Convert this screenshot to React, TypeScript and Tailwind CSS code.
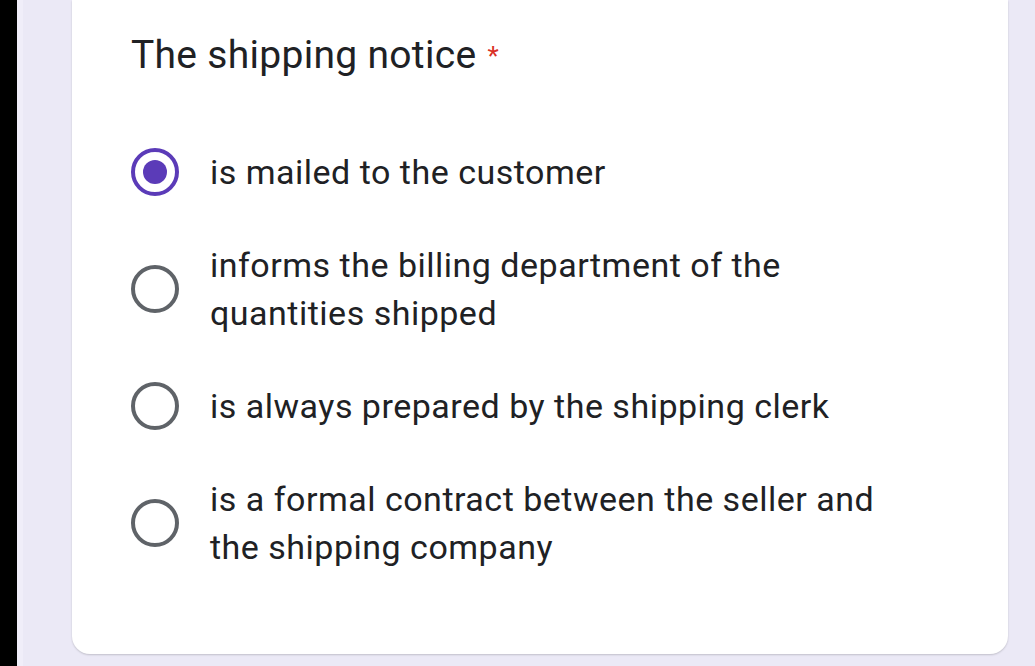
import React from 'react';

const OPTIONS: { lines: string[]; checked?: boolean }[] = [
  { lines: ['is mailed to the customer'], checked: true },
  { lines: ['informs the billing department of the', 'quantities shipped'] },
  { lines: ['is always prepared by the shipping clerk'] },
  { lines: ['is a formal contract between the seller and', 'the shipping company'] },
];

function Radio({ checked }: { checked?: boolean }) {
  if (checked) {
    return (
      <div className="w-12 h-12 shrink-0 rounded-full border-4 border-[#5b3bb8] flex items-center justify-center">
        <div className="w-6 h-6 rounded-full bg-[#5b3bb8]" />
      </div>
    );
  }
  return <div className="w-12 h-12 shrink-0 rounded-full border-4 border-[#5f6368]" />;
}

export default function App() {
  return (
    <div
      className="w-[1035px] h-[666px] flex bg-[#ebe9f6] overflow-hidden"
      style={{ fontFamily: 'Roboto, "Liberation Sans", sans-serif' }}
    >
      <div className="w-[17px] shrink-0 bg-black" />
      <div className="w-[6px] shrink-0 bg-[#f0eef9]" />
      <div className="flex-1 flex flex-col pl-[49px] pr-[27px] pb-[12px]">
        <div className="flex-1 bg-white rounded-b-[18px] shadow-[0_1px_2px_rgba(0,0,0,0.18)] pl-[59px] pt-[32px]">
          <h1 className="text-[39px] leading-[46px] tracking-[0.3px] text-[#202124] font-normal">
            The shipping notice
            <span className="ml-[11px] text-[#d93025] text-[26px] align-top relative top-[1px]">*</span>
          </h1>
          <div className="mt-[70px] flex flex-col gap-[45px]">
            {OPTIONS.map((opt, i) => (
              <div key={i} className="flex items-center gap-[31px]">
                <Radio checked={opt.checked} />
                <div className="text-[34px] leading-[48px] tracking-[0.5px] text-[#202124]">
                  {opt.lines.map((l, j) => (
                    <div key={j}>{l}</div>
                  ))}
                </div>
              </div>
            ))}
          </div>
        </div>
      </div>
    </div>
  );
}
